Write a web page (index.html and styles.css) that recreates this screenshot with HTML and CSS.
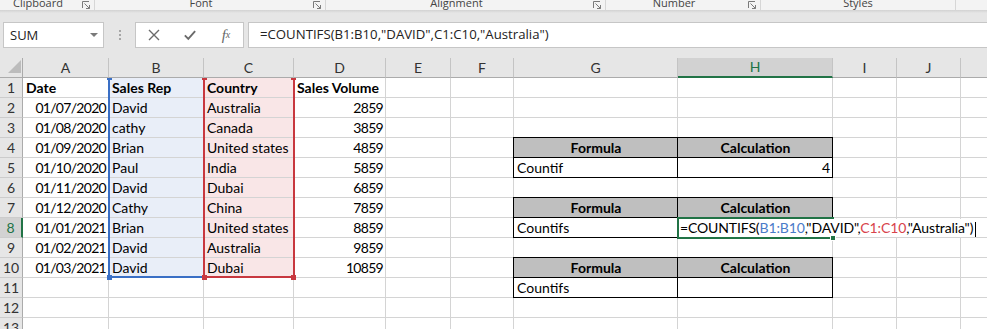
FILE: index.html
```html
<!DOCTYPE html>
<html lang="en">
<head>
    <meta charset="UTF-8">
    <title>COUNTIFS example</title>
    <link rel="stylesheet" href="styles.css">
</head>
<body>

<div class="ribbon">
    <div class="group g-clip"><span class="glabel">Clipboard</span><span class="launch"><svg width="9" height="9" viewBox="0 0 9 9"><path d="M0.5 7V0.5H7" fill="none" stroke="#7a7a7a"/><path d="M2.5 2.5L7.5 7.5M7.5 4V7.5H4" fill="none" stroke="#7a7a7a"/></svg></span></div>
    <div class="group g-font"><span class="glabel">Font</span><span class="launch"><svg width="9" height="9" viewBox="0 0 9 9"><path d="M0.5 7V0.5H7" fill="none" stroke="#7a7a7a"/><path d="M2.5 2.5L7.5 7.5M7.5 4V7.5H4" fill="none" stroke="#7a7a7a"/></svg></span></div>
    <div class="group g-align"><span class="glabel">Alignment</span><span class="launch"><svg width="9" height="9" viewBox="0 0 9 9"><path d="M0.5 7V0.5H7" fill="none" stroke="#7a7a7a"/><path d="M2.5 2.5L7.5 7.5M7.5 4V7.5H4" fill="none" stroke="#7a7a7a"/></svg></span></div>
    <div class="group g-num"><span class="glabel">Number</span><span class="launch"><svg width="9" height="9" viewBox="0 0 9 9"><path d="M0.5 7V0.5H7" fill="none" stroke="#7a7a7a"/><path d="M2.5 2.5L7.5 7.5M7.5 4V7.5H4" fill="none" stroke="#7a7a7a"/></svg></span></div>
    <div class="group g-styles"><span class="glabel">Styles</span></div>
</div>
<div class="ribbon-shadow"></div>

<div class="fbar">
    <div class="namebox">
        <span>SUM</span>
        <svg width="8" height="4" viewBox="0 0 8 4"><path d="M0 0H8L4 4Z" fill="#7a7a7a"/></svg>
    </div>
    <div class="grip"><i></i><i></i><i></i></div>
    <div class="fbtns">
        <span class="fbtn"><svg width="12" height="12" viewBox="0 0 12 12"><path d="M1 1L11 11M11 1L1 11" stroke="#6a6a6a" stroke-width="1.4"/></svg></span>
        <span class="fbtn"><svg width="14" height="12" viewBox="0 0 14 12"><path d="M1 6.5L5 10.5L13 1.5" fill="none" stroke="#6a6a6a" stroke-width="2.2"/></svg></span>
        <span class="fbtn fx">f<sub>x</sub></span>
    </div>
    <div class="finput">=COUNTIFS(B1:B10,"DAVID",C1:C10,"Australia")</div>
</div>

<div class="sheet-wrap">
    <div class="sheet" id="sheet"></div>
    <div class="marks">
        <div class="rng rng-b"><i class="h tl"></i><i class="h bl"></i></div>
        <div class="rng rng-c"><i class="h tl"></i><i class="h tr"></i><i class="h bl"></i><i class="h br"></i></div>
        <div class="frame f1"></div>
        <div class="frame f2"></div>
        <div class="frame f3"></div>
        <div class="active">
            <span class="edit">=COUNTIFS(<span class="ref-b">B1:B10</span>,"DAVID",<span class="ref-c">C1:C10</span>,"Australia")</span>
            <i class="fill-handle"></i>
        </div>
    </div>
</div>

<script>
    const cols = ['A', 'B', 'C', 'D', 'E', 'F', 'G', 'H', 'I', 'J', 'K'];
    const dates = ['01/07/2020', '01/08/2020', '01/09/2020', '01/10/2020', '01/11/2020', '01/12/2020', '01/01/2021', '01/02/2021', '01/03/2021'];
    const reps = ['David', 'cathy', 'Brian', 'Paul', 'David', 'Cathy', 'Brian', 'David', 'David'];
    const countries = ['Australia', 'Canada', 'United states', 'India', 'Dubai', 'China', 'United states', 'Australia', 'Dubai'];

    // cell contents: [text, class]
    const cells = {
        A1: ['Date', 'bold'], B1: ['Sales Rep', 'bold'], C1: ['Country', 'bold'], D1: ['Sales Volume', 'bold'],
        G4: ['Formula', 'thead'], H4: ['Calculation', 'thead'],
        G5: ['Countif', 'tcell'], H5: ['4', 'tcell right'],
        G7: ['Formula', 'thead'], H7: ['Calculation', 'thead'],
        G8: ['Countifs', 'tcell'], H8: ['', 'tcell'],
        G10: ['Formula', 'thead'], H10: ['Calculation', 'thead'],
        G11: ['Countifs', 'tcell'], H11: ['', 'tcell']
    };
    dates.forEach((d, i) => {
        const r = i + 2;
        cells['A' + r] = [d, 'right num'];
        cells['B' + r] = [reps[i], ''];
        cells['C' + r] = [countries[i], ''];
        cells['D' + r] = [String(2859 + i * 1000), 'right num'];
    });

    const sheet = document.getElementById('sheet');

    function add(text, cls) {
        const el = document.createElement('div');
        el.className = cls;
        el.textContent = text;
        sheet.appendChild(el);
        return el;
    }

    // header row
    const corner = add('', 'corner');
    corner.innerHTML = '<svg width="13" height="13" viewBox="0 0 13 13"><path d="M13 0V13H0Z" fill="#bcbcbc"/></svg>';
    cols.forEach(c => add(c, c === 'H' ? 'ch sel' : 'ch'));

    for (let r = 1; r <= 13; r++) {
        add(String(r), r === 8 ? 'rh sel' : 'rh');
        cols.forEach(c => {
            const v = cells[c + r] || ['', ''];
            let cls = 'c ' + v[1];
            if (c === 'B' && r <= 10) cls += ' fill-b';
            if (c === 'C' && r <= 10) cls += ' fill-c';
            add(v[0], cls);
        });
    }
</script>

</body>
</html>
```

FILE: styles.css
```css
body { margin: 0; width: 987px; height: 329px; overflow: hidden; background: #e6e6e6; font-family: "Lato", sans-serif; }

/* ribbon group labels (cut off at top) */
.ribbon { display: flex; height: 10px; background: #f3f3f3; overflow: hidden; font-family: "Open Sans", sans-serif; font-size: 11px; color: #444; }
.group { display: flex; border-right: 1px solid #d6d6d6; padding-right: 3px; box-sizing: border-box; }
.g-clip { width: 95px; }
.g-font { width: 231px; }
.g-align { width: 280px; }
.g-num { width: 155px; }
.g-styles { width: 195px; padding-right: 0; }
.glabel { flex: 1; text-align: center; line-height: 12px; margin-top: -3px; white-space: nowrap; }
.launch { width: 9px; margin-left: 6px; margin-top: -2px; }
.ribbon-shadow { height: 3px; background: linear-gradient(#d2d2d2, #e6e6e6); }

/* formula bar */
.fbar { display: flex; height: 26px; margin-top: 9px; font-family: "Open Sans", sans-serif; color: #222; }
.namebox { margin-left: 3px; width: 101px; box-sizing: border-box; border: 1px solid #c6c6c6; background: #fff; display: flex; align-items: center; justify-content: space-between; padding: 0 5px 0 6px; font-size: 13px; }
.grip { width: 31px; display: flex; flex-direction: column; align-items: center; justify-content: center; gap: 2px; }
.grip i { width: 2px; height: 2px; background: #a6a6a6; }
.fbtns { width: 109px; box-sizing: border-box; border: 1px solid #c6c6c6; background: #fff; display: flex; align-items: center; gap: 24px; padding-left: 12px; }
.fbtn { width: 12px; display: flex; justify-content: center; }
.fx { font-family: "Liberation Serif", serif; font-style: italic; font-size: 15px; color: #666; line-height: 14px; }
.fx sub { font-size: 10px; vertical-align: -1px; }
.finput { flex: 1; margin-left: 4px; border: 1px solid #c6c6c6; border-right: none; background: #fff; padding-left: 11px; font-size: 13.2px; line-height: 23px; white-space: nowrap; }

/* sheet */
.sheet-wrap { position: relative; margin-top: 10px; }
.sheet, .marks {
    display: grid;
    grid-template-columns: 23px 86px 95px 90px 92px 65px 63px 164px 155px 64px 64px 64px;
    grid-auto-rows: 20px;
}
.sheet > div { box-sizing: border-box; white-space: nowrap; overflow: hidden; font-size: 14px; line-height: 19px; }
.corner { position: relative; z-index: 2; background: #e6e6e6; border-right: 1px solid #ababab; border-bottom: 1px solid #ababab; display: flex; justify-content: flex-end; align-items: flex-end; padding: 0 1px 4px 0; }
.ch { position: relative; z-index: 2; background: #e6e6e6; color: #333; text-align: center; border-right: 1px solid #c4c4c4; border-bottom: 1px solid #ababab; }
.ch.sel { background: #d2d2d2; color: #217346; border-bottom: 2px solid #217346; line-height: 18px; }
.rh { background: #e6e6e6; color: #333; text-align: center; border-right: 1px solid #ababab; border-bottom: 1px solid #cccccc; }
.rh.sel { background: #d2d2d2; color: #217346; border-right: 2px solid #217346; }
.c { background: #fff; color: #000; border-right: 1px solid #d4d4d4; border-bottom: 1px solid #d4d4d4; padding: 0 2px 0 3px; }
.right { text-align: right; }
.num { letter-spacing: -0.7px; padding-right: 2px; }
.bold { font-weight: bold; }
.fill-b { background: #e9eef8; }
.fill-c { background: #f9e6e7; }
.thead { background: #bfbfbf; font-weight: bold; text-align: center; border-right-color: #000; border-bottom-color: #000; }
.tcell { border-right-color: #000; border-bottom-color: #000; }

/* overlays: range references, table frames, active cell */
.marks { position: absolute; top: 0; left: 0; z-index: 1; pointer-events: none; }
.rng { position: relative; }
.rng-b { grid-area: 2 / 3 / 12 / 4; margin-left: -1px; border-left: 2px solid #3a6fc5; border-bottom: 2px solid #3a6fc5; }
.rng-c { grid-area: 2 / 4 / 12 / 5; margin: 0 -1px 0 -1px; border: 2px solid #c8383f; border-top: none; }
.h { position: absolute; width: 5px; height: 5px; }
.rng-b .h { background: #3a6fc5; }
.rng-c .h { background: #c8383f; }
.h.tl { left: -3px; top: -3px; }
.h.tr { right: -3px; top: -3px; }
.h.bl { left: -3px; bottom: -4px; }
.h.br { right: -3px; bottom: -4px; }
.frame { margin: -1px 0 0 -1px; border: 1px solid #000; }
.f1 { grid-area: 5 / 8 / 7 / 10; }
.f2 { grid-area: 8 / 8 / 10 / 10; }
.f3 { grid-area: 11 / 8 / 13 / 10; }
.active { grid-area: 9 / 9 / 10 / 10; margin: -1px; border: 2px solid #217346; position: relative; }
.edit { position: absolute; left: 1px; top: 0; z-index: 1; height: 18px; line-height: 18px; font-size: 14px; letter-spacing: -0.12px; background: #fff; white-space: nowrap; padding-right: 3px; }
.edit::after { content: ""; position: absolute; right: 0; top: 3px; width: 1px; height: 15px; background: #000; }
.ref-b { color: #4a7bc9; }
.ref-c { color: #d8434b; }
.fill-handle { position: absolute; right: -4px; bottom: -4px; z-index: 2; width: 4px; height: 4px; background: #217346; border: 1px solid #fff; }
```
